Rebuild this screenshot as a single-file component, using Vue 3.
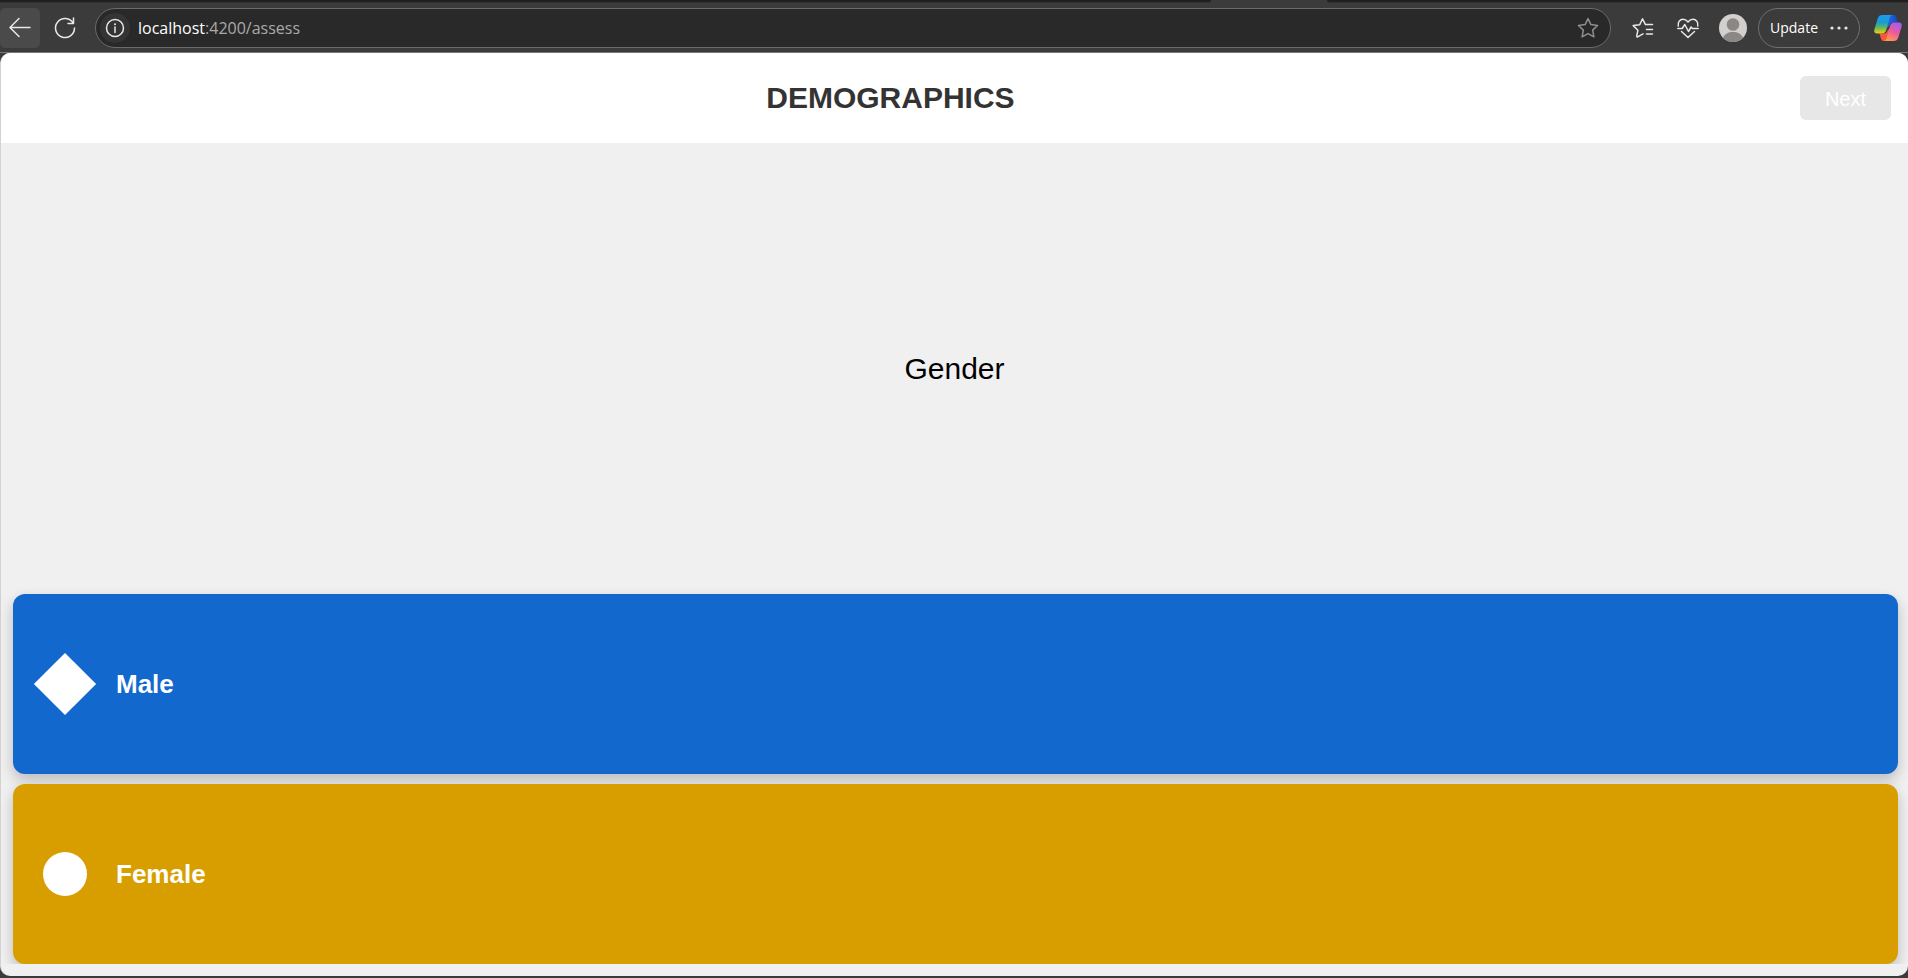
<script setup>
const options = [
  { id: 'male', label: 'Male', shape: 'diamond' },
  { id: 'female', label: 'Female', shape: 'circle' },
]
</script>

<template>
  <div class="window">
    <div class="tab-strip">
      <span class="tab-rest tab-rest-left"></span>
      <span class="tab-gap"></span>
      <span class="tab-rest"></span>
    </div>
    <nav class="toolbar" aria-label="Browser toolbar">
      <button class="tool back" type="button" aria-label="Back">
        <svg width="40" height="40" viewBox="0 0 40 40"><path d="M30 19.5H10.5M19 10.5l-9 9 9 9" /></svg>
      </button>
      <button class="tool reload" type="button" aria-label="Reload">
        <svg width="40" height="40" viewBox="0 0 40 40"><path d="M28.2 15.2A9.5 9.5 0 1 0 29.5 20M28.5 10v5.5h-5.5" /></svg>
      </button>
      <div class="address">
        <button class="site-info" type="button" aria-label="Site information">
          <svg width="30" height="30" viewBox="0 0 30 30"><circle cx="15" cy="15" r="8.5" /><path d="M15 14v5.500" /><circle class="dot" cx="15" cy="11.2" r="1" /></svg>
        </button>
        <span class="url"><span class="host">localhost</span>:4200/assess</span>
        <button class="favorite" type="button" aria-label="Add to favorites">
          <svg width="24" height="24" viewBox="0 0 24 24"><path d="M12 2.600l2.900 6 6.600.9-4.800 4.600 1.200 6.700-5.900-3.200-5.900 3.200 1.200-6.700-4.800-4.600 6.600-.9z" /></svg>
        </button>
      </div>
      <button class="tool" type="button" aria-label="Favorites">
        <svg width="24" height="24" viewBox="0 0 24 24"><path d="M14.500 8.600H21.500M15.500 13.500h6M15.500 18h6M14.500 8.600L11.500 2.800 8.700 8.700l-6.500.9 4.700 4.600-1.200 5.900q0 1.200 1 .7l5.300-3" /></svg>
      </button>
      <button class="tool heart" type="button" aria-label="Browser essentials">
        <svg width="24" height="24" viewBox="0 0 24 24"><path d="M2.300 10C1.500 6 4 3.300 7 3.300c2.100 0 3.600 1 5 2.700 1.400-1.700 2.900-2.700 5-2.700 3 0 5.500 2.700 4.700 6.700M1.800 12.500h4.400l2.600-4 3.700 7 2.600-4.500 1.300 1.500h5.800M5.500 15.500L12 21.500l6.500-6" /></svg>
      </button>
      <button class="tool profile" type="button" aria-label="Profile">
        <svg width="28" height="28" viewBox="0 0 28 28">
          <circle cx="14" cy="14" r="14" fill="#d2d0ce" />
          <circle cx="14" cy="10.5" r="6.3" fill="#8a8785" />
          <path d="M4 23.800C5.500 20 9.500 18 14 18s8.500 2 10 5.800A14 14 0 0 1 4 23.800z" fill="#8a8785" />
        </svg>
      </button>
      <button class="update" type="button">
        Update
        <svg width="18" height="6" viewBox="0 0 18 6"><circle cx="2" cy="3" r="1.600" /><circle cx="9" cy="3" r="1.600" /><circle cx="16" cy="3" r="1.600" /></svg>
      </button>
      <button class="tool copilot" type="button" aria-label="Copilot">
        <svg width="28" height="28" viewBox="0 0 28 28">
          <defs>
            <linearGradient id="cool" x1="0" y1="0" x2="0" y2="1">
              <stop offset="0" stop-color="#1a9df0" /><stop offset=".4" stop-color="#199bd3" /><stop offset=".68" stop-color="#60b95c" /><stop offset="1" stop-color="#f5cb12" />
            </linearGradient>
            <linearGradient id="warm" x1=".7" y1="0" x2=".3" y2="1">
              <stop offset="0" stop-color="#a45cf0" /><stop offset=".5" stop-color="#ee5a9b" /><stop offset="1" stop-color="#ff9a55" />
            </linearGradient>
            <linearGradient id="fold" x1="0" y1="0" x2="1" y2="0">
              <stop offset="0" stop-color="#1f6fe0" /><stop offset="1" stop-color="#1a45c8" />
            </linearGradient>
          </defs>
          <path d="M15 1h4.500c2 0 2.500 1.500 3 3l1.200 4.500h-4.200c-2.500 0-3.500 1-4 3l-3 3z" fill="url(#fold)" />
          <path d="M13 27h-3.500c-1.700 0-2.200-1.500-2.700-3L5.500 19.500h4c2.500 0 3.500-1 4-3l3-3z" fill="#f25a38" />
          <path d="M8.500 1H19c-2 0-3 1.300-3.500 3.300l-3.200 11.500c-.7 2.500-2 3.700-4.300 3.700H3c-2.500 0-3.200-2-2.500-4.500l3.200-10.500C4.500 2 6 1 8.500 1z" fill="url(#cool)" />
          <path d="M19.500 27H9.500c2 0 2.700-1.300 3.200-3.300l3.300-11.500c.7-2.500 2-3.700 4.300-3.700H25c2.500 0 3.200 2 2.500 4.500l-3.200 10.500c-.8 2.500-2.300 3.500-4.800 3.500z" fill="url(#warm)" />
        </svg>
      </button>
    </nav>

    <div class="page">
      <header class="header">
        <h1>DEMOGRAPHICS</h1>
        <button class="next" type="button" disabled>Next</button>
      </header>
      <main class="assessment">
        <h2 class="question">Gender</h2>
        <div class="options" role="group" aria-label="Gender">
          <button v-for="option in options" :key="option.id" type="button" class="option" :class="option.id">
            <span class="shape-box"><span class="shape" :class="option.shape"></span></span>
            {{ option.label }}
          </button>
        </div>
      </main>
    </div>
  </div>
</template>

<style>
body {
  margin: 0;
  background: #3b3b3b;
}
</style>

<style scoped>
.window {
  display: flex;
  flex-direction: column;
  box-sizing: border-box;
  min-height: 100vh;
  padding-bottom: 2px;
  background: #3b3b3b;
  font-family: Arial, "Liberation Sans", sans-serif;
}
button {
  margin: 0;
  padding: 0;
  border: 0;
  background: none;
  font-family: inherit;
}
.tab-strip {
  display: flex;
  height: 3px;
}
.tab-rest {
  flex: 1;
  height: 2px;
  border-bottom: 1px solid #323232;
  border-bottom-left-radius: 3px;
  background: #202020;
}
.tab-rest-left {
  flex: 2.085;
  border-radius: 0 0 3px 0;
}
.tab-gap {
  width: 116px;
}
.toolbar {
  display: flex;
  align-items: center;
  height: 49px;
  border-bottom: 1px solid #777;
}
svg {
  display: block;
  fill: none;
  stroke: #e8e8e8;
  stroke-width: 1.5;
  stroke-linecap: round;
  stroke-linejoin: round;
}
.tool {
  flex: none;
  margin-right: 21px;
}
.back {
  margin-right: 5px;
  border-radius: 5px;
  background: #4a4a4a;
}
.reload {
  margin-right: 10px;
}
.address {
  display: flex;
  flex: 1;
  align-items: center;
  box-sizing: border-box;
  height: 40px;
  margin-right: 20px;
  padding: 0 10px 0 4px;
  border: 1px solid #6b6b6b;
  border-radius: 20px;
  background: #292929;
}
.site-info {
  border-radius: 50%;
  background: #343434;
}
.dot {
  fill: #e8e8e8;
  stroke: none;
}
.url {
  flex: 1;
  margin-left: 8px;
  color: #a9a9a9;
  font: 16px/24px "Segoe UI", "Open Sans", sans-serif;
}
.host {
  color: #fff;
}
.favorite svg {
  stroke: #8f8f8f;
}
.heart {
  margin-right: 19px;
}
.profile {
  margin-right: 11px;
}
.profile svg,
.copilot svg {
  stroke: none;
}
.update {
  display: flex;
  align-items: center;
  gap: 12px;
  box-sizing: border-box;
  height: 40px;
  margin-right: 14px;
  padding: 0 11px;
  border: 1px solid #707070;
  border-radius: 20px;
  color: #fff;
  font: 14px/20px "Segoe UI", "Open Sans", sans-serif;
}
.update svg {
  fill: #e8e8e8;
  stroke: none;
}
.copilot {
  margin-right: 6px;
}
.page {
  display: flex;
  flex: 1;
  flex-direction: column;
  overflow: hidden;
  border-left: 1px solid #d2d2d2;
  border-radius: 10px;
  background: #f0f0f0;
}
.header {
  display: flex;
  align-items: center;
  gap: 36px;
  height: 90px;
  padding: 0 17px 0 16px;
  background: #fff;
}
h1 {
  flex: 1;
  margin: 0;
  color: #333;
  font-size: 30px;
  line-height: 36px;
  text-align: center;
}
.next {
  padding: 11px 25px 9px;
  border-radius: 6px;
  background: #e7e7e7;
  color: #fff;
  font-size: 20px;
  line-height: 24px;
}
.assessment {
  display: flex;
  flex: 1;
  flex-direction: column;
  overflow: hidden;
  margin-bottom: 12px;
}
.question {
  display: flex;
  flex: 1;
  align-items: center;
  justify-content: center;
  margin: 0;
  color: #000;
  font-size: 30px;
  font-weight: 400;
  line-height: 36px;
}
.options {
  display: flex;
  flex-direction: column;
  gap: 10px;
  padding: 0 10px 0 12px;
}
.option {
  display: flex;
  align-items: center;
  gap: 20px;
  height: 180px;
  padding: 0 20px;
  border-radius: 12px;
  box-shadow: 0 6px 14px rgb(0 0 0 / 22%);
  color: #fff;
  font-size: 26px;
  font-weight: 700;
  line-height: 30px;
}
.male {
  background: #1368ce;
}
.female {
  background: #d89e00;
}
.shape-box {
  display: flex;
  align-items: center;
  justify-content: center;
  width: 63px;
  height: 64px;
}
.shape {
  flex: none;
  width: 44px;
  height: 44px;
  background: #fff;
}
.diamond {
  transform: rotate(45deg);
}
.circle {
  border-radius: 50%;
}
</style>
